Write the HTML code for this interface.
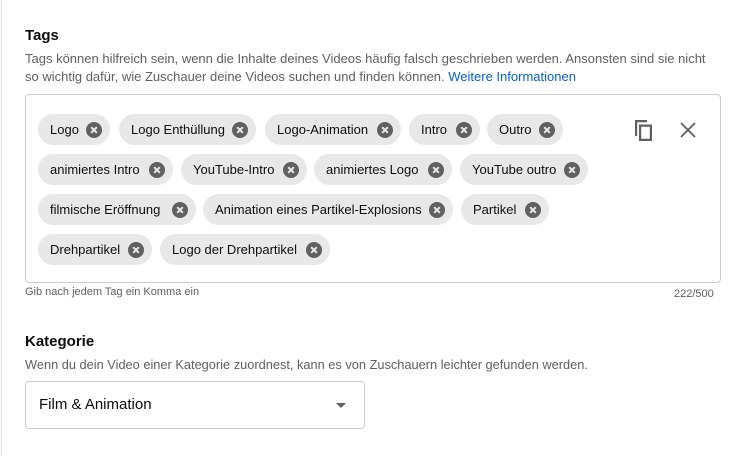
<!DOCTYPE html>
<html><head><style>
*{margin:0;padding:0;box-sizing:border-box}
body{width:732px;height:458px;background:#fff;font-family:"Liberation Sans",Arial,sans-serif;position:relative;overflow:hidden;color:#0d0d0d}
.vl{position:absolute;left:1px;top:0;width:1px;height:456px;background:#e0e0e0}
.abs{position:absolute;white-space:nowrap}
h{font-size:15px;font-weight:bold;color:#0d0d0d}
.d{font-size:13px;color:#606060}
.box{position:absolute;left:25px;top:94px;width:696px;height:189px;border:1px solid #ccc;border-radius:4px}
.c{position:absolute;height:31px;background:#e8e8e8;border-radius:16px;font-size:13px;color:#0d0d0d;line-height:31px;padding-left:12px}
.c i{position:absolute;right:8px;top:8px;width:16px;height:16px;border-radius:50%;background:#606060}
.c i:before,.c i:after{content:"";position:absolute;left:4px;top:7px;width:8px;height:2px;background:#e8e8e8;transform:rotate(45deg)}
.c i:after{transform:rotate(-45deg)}
.sel{position:absolute;left:25px;top:381px;width:340px;height:48px;border:1px solid #ccc;border-radius:4px;font-size:15px;line-height:46px;padding-left:13px}
.tri{position:absolute;right:18px;top:21px;border-left:5px solid transparent;border-right:5px solid transparent;border-top:5px solid #606060}
</style></head><body>
<div class="vl"></div>
<div class="abs" style="left:25px;top:27px"><h>Tags</h></div>
<div class="abs d" style="left:25px;top:51px">Tags können hilfreich sein, wenn die Inhalte deines Videos häufig falsch geschrieben werden. Ansonsten sind sie nicht</div>
<div class="abs d" style="left:25px;top:69px">so wichtig dafür, wie Zuschauer deine Videos suchen und finden können. <span style="color:#065fd4">Weitere Informationen</span></div>
<div class="box"></div>
<div class="c" style="left:38px;top:114px;width:72px">Logo<i></i></div>
<div class="c" style="left:119px;top:114px;width:137px">Logo Enthüllung<i></i></div>
<div class="c" style="left:265px;top:114px;width:136px">Logo-Animation<i></i></div>
<div class="c" style="left:409px;top:114px;width:71px">Intro<i></i></div>
<div class="c" style="left:487px;top:114px;width:76px">Outro<i></i></div>
<div class="c" style="left:38px;top:154px;width:135px">animiertes Intro<i></i></div>
<div class="c" style="left:181px;top:154px;width:126px">YouTube-Intro<i></i></div>
<div class="c" style="left:314px;top:154px;width:138px">animiertes Logo<i></i></div>
<div class="c" style="left:460px;top:154px;width:128px">YouTube outro<i></i></div>
<div class="c" style="left:38px;top:194px;width:158px">filmische Eröffnung<i></i></div>
<div class="c" style="left:203px;top:194px;width:250px">Animation eines Partikel-Explosions<i></i></div>
<div class="c" style="left:461px;top:194px;width:88px">Partikel<i></i></div>
<div class="c" style="left:38px;top:234px;width:114px">Drehpartikel<i></i></div>
<div class="c" style="left:160px;top:234px;width:170px">Logo der Drehpartikel<i></i></div>
<svg class="abs" style="left:632px;top:118px" width="24" height="24" viewBox="0 0 24 24"><path d="M3 2h12v2.2H5.2V18H3z M7 6.5h13V23H7z M9.2 8.7v12.1h8.6V8.7z" fill="#606060" fill-rule="evenodd"/></svg>
<svg class="abs" style="left:678px;top:120px" width="20" height="20" viewBox="0 0 20 20"><path d="M3 3L17 17M17 3L3 17" stroke="#606060" stroke-width="1.8"/></svg>
<div class="abs" style="left:25px;top:286px;font-size:11px;color:#606060">Gib nach jedem Tag ein Komma ein</div>
<div class="abs" style="left:674px;top:288px;font-size:11px;color:#606060">222/500</div>
<div class="abs" style="left:25px;top:333px"><h>Kategorie</h></div>
<div class="abs d" style="left:25px;top:357px;font-size:12.8px">Wenn du dein Video einer Kategorie zuordnest, kann es von Zuschauern leichter gefunden werden.</div>
<div class="sel">Film &amp; Animation<div class="tri"></div></div>
</body></html>
